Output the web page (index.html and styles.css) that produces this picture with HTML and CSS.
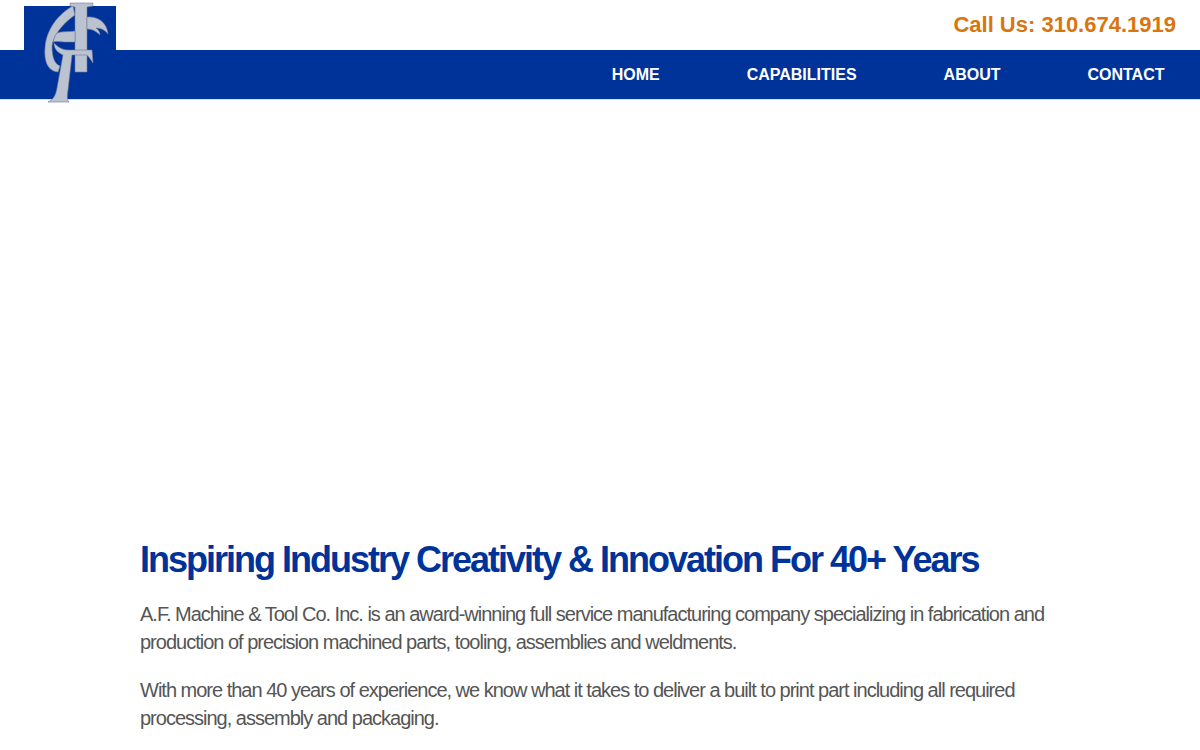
FILE: index.html
```html
<!DOCTYPE html>
<html lang="en">
<head>
<meta charset="utf-8">
<title>A.F. Machine &amp; Tool Co. Inc.</title>
<link rel="stylesheet" href="styles.css">
</head>
<body>
<header class="site-header">
  <div class="top-bar">
    <a class="phone" href="#">Call Us: 310.674.1919</a>
  </div>
  <nav class="main-nav">
    <a href="#">HOME</a>
    <a href="#">CAPABILITIES</a>
    <a href="#">ABOUT</a>
    <a href="#">CONTACT</a>
  </nav>
  <a class="logo" href="#" aria-label="A.F. Machine and Tool">
    <svg width="92" height="104" viewBox="24 0 92 104">
      <rect x="24" y="6" width="92" height="93" fill="#003399"/>
      <g fill="#bcc3d0" stroke="#6f7b99" stroke-width=".6" stroke-linejoin="round">
        <path d="M73 6C58 14 46 30 45 48C44 60 47 71 58 72L60 66C55 64 52 58 52 46C53 36 62 24 75 15Z"/>
        <path d="M70 3H93V6L87 7V72H75V7L70 6Z"/>
        <path d="M87 17C96 16 107 21 108 34C105 30 101 28 96 28C99 30 100 33 100 35C96 31 92 29 87 29Z"/>
        <path d="M57 33C62 31 70 32 75 31V42H66C62 42 57 41 53 42C54 38 55 36 57 33Z"/>
        <path d="M54 43C58 47 62 50 68 50H92L93 63C90 59 89 56 86 55H72L68 90C67 96 67 100 69 102H48C53 100 56 95 57 88L63 55C59 53 54 50 54 43Z"/>
      </g>
    </svg>
  </a>
</header>
<div class="hero"></div>
<main class="intro">
  <h1>Inspiring Industry Creativity &amp; Innovation For 40+ Years</h1>
  <p>A.F. Machine &amp; Tool Co. Inc. is an award-winning full service manufacturing company specializing in fabrication and production of precision machined parts, tooling, assemblies and weldments.</p>
  <p>With more than 40 years of experience, we know what it takes to deliver a built to print part including all required processing, assembly and packaging.</p>
</main>
</body>
</html>
```
FILE: styles.css
```css
* { box-sizing: border-box; }
html, body { margin: 0; padding: 0; height: 750px; overflow: hidden; background: #fff; }
body { font-family: "Liberation Sans", Arial, sans-serif; }
a { text-decoration: none; }
.site-header { position: relative; }
.top-bar { height: 50px; display: flex; justify-content: flex-end; align-items: center; padding-right: 24px; }
.phone { color: #d9750f; font-size: 22px; font-weight: 700; }
.main-nav { height: 50px; background: #003399; border-bottom: 1px solid #d3def2; display: flex; justify-content: flex-end; align-items: center; gap: 87px; padding-right: 35.5px; }
.main-nav a { color: #fff; font-size: 16px; font-weight: 700; }
.logo { position: absolute; left: 24px; top: 0; display: block; line-height: 0; }
.hero { height: 435px; }
.intro { padding: 0 140px; }
h1 { margin: 0 0 15px; color: #003399; font-size: 36px; line-height: 50px; font-weight: 700; letter-spacing: -2px; }
p { margin: 0 0 20px; color: #555; font-size: 20px; line-height: 28px; letter-spacing: -1px; }
```
